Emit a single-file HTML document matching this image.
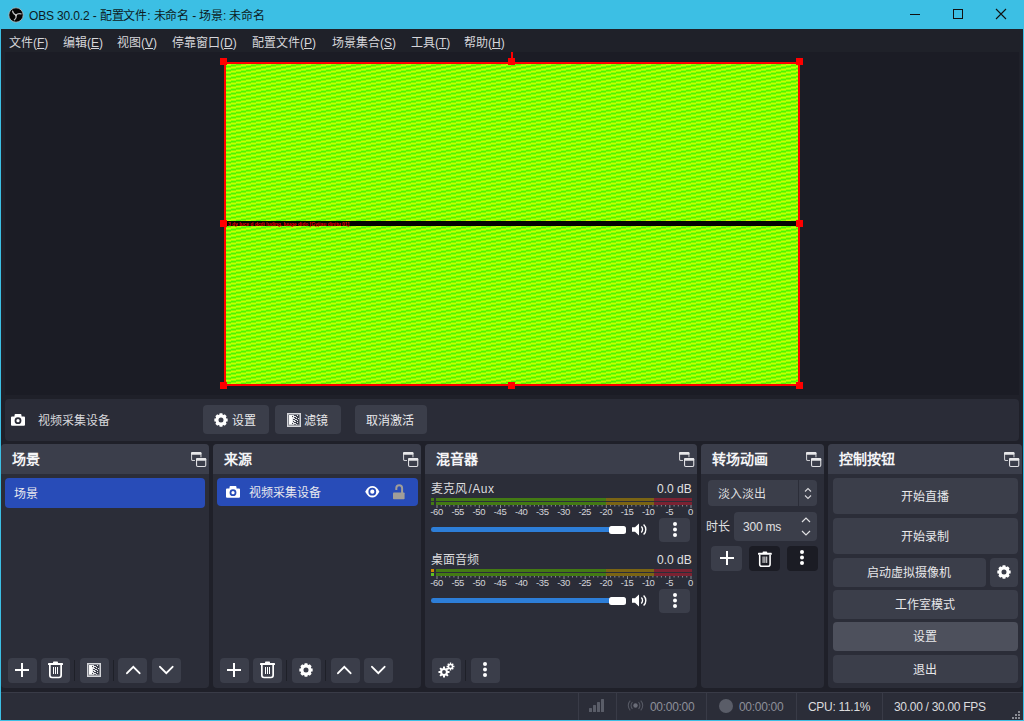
<!DOCTYPE html>
<html lang="zh-CN">
<head>
<meta charset="utf-8">
<style>
*{margin:0;padding:0;box-sizing:border-box}
html,body{width:1024px;height:721px;overflow:hidden}
body{position:relative;background:#1f2029;font-family:"Liberation Sans",sans-serif;color:#e6e6e8;font-size:12px}
.a{position:absolute}
svg.a{display:block;overflow:visible}
.t{position:absolute;white-space:nowrap;line-height:1}
u{text-decoration:underline;text-underline-offset:1px}
</style>
</head>
<body>
<div class="a" style="left:0px;top:0px;width:1024px;height:29px;background:#3cbfe4;"></div>
<div class="a" style="left:0px;top:0px;width:1px;height:721px;background:#3cbfe4;"></div>
<div class="a" style="left:1023px;top:0px;width:1px;height:721px;background:#3cbfe4;"></div>
<div class="a" style="left:0px;top:720px;width:1024px;height:1px;background:#3cbfe4;"></div>
<svg class="a" style="left:8px;top:6.5px" width="16" height="16" viewBox="0 0 16 16"><circle cx="8" cy="8" r="7.2" fill="#050505" stroke="#b9bcbf" stroke-width="0.8"/><g fill="none" stroke="#b8b8b8" stroke-width="1.3" stroke-linecap="round"><path d="M8 8 Q 5.2 7.2 4.6 4.2"/><path d="M8 8 Q 5.2 7.2 4.6 4.2" transform="rotate(120 8 8)"/><path d="M8 8 Q 5.2 7.2 4.6 4.2" transform="rotate(240 8 8)"/></g><circle cx="8" cy="8" r="1.1" fill="#c8c8c8"/></svg>
<div class="t" style="left:29px;top:9.5px;font-size:12px;color:#0d1b22;letter-spacing:-0.15px">OBS 30.0.2 - 配置文件: 未命名 - 场景: 未命名</div>
<div class="a" style="left:910px;top:14px;width:10px;height:1px;background:#111;"></div>
<div class="a" style="left:953px;top:9px;width:10px;height:10px;border:1px solid #111"></div>
<svg class="a" style="left:995px;top:8px" width="12" height="12" viewBox="0 0 12 12"><path d="M1 1L11 11M11 1L1 11" stroke="#111" stroke-width="1.1"/></svg>
<div class="a" style="left:1px;top:29px;width:1022px;height:23px;background:#1f2129;"></div>
<div class="t" style="left:9px;top:36.5px;font-size:12px;color:#d6d6da;">文件(<u>F</u>)</div>
<div class="t" style="left:63px;top:36.5px;font-size:12px;color:#d6d6da;">编辑(<u>E</u>)</div>
<div class="t" style="left:117px;top:36.5px;font-size:12px;color:#d6d6da;">视图(<u>V</u>)</div>
<div class="t" style="left:172px;top:36.5px;font-size:12px;color:#d6d6da;">停靠窗口(<u>D</u>)</div>
<div class="t" style="left:252px;top:36.5px;font-size:12px;color:#d6d6da;">配置文件(<u>P</u>)</div>
<div class="t" style="left:332px;top:36.5px;font-size:12px;color:#d6d6da;">场景集合(<u>S</u>)</div>
<div class="t" style="left:411px;top:36.5px;font-size:12px;color:#d6d6da;">工具(<u>T</u>)</div>
<div class="t" style="left:464px;top:36.5px;font-size:12px;color:#d6d6da;">帮助(<u>H</u>)</div>
<div class="a" style="left:5px;top:52px;width:1014px;height:343px;background:#1b1c25;"></div>
<div class="a" style="left:224px;top:62px;width:576px;height:324px;border:2px solid #ff0000;background:#88fc00"></div>
<svg class="a" style="left:226px;top:64px" width="572" height="320"><defs><pattern id="gp" width="20" height="4" patternUnits="userSpaceOnUse"><rect x="0" y="0" width="5" height="1" fill="#c8ff00"/><rect x="0" y="1" width="5" height="1" fill="#90ff00"/><rect x="0" y="2" width="5" height="1" fill="#4cf600"/><rect x="0" y="3" width="5" height="1" fill="#84fc00"/><rect x="5" y="3" width="5" height="1" fill="#c8ff00"/><rect x="5" y="0" width="5" height="1" fill="#90ff00"/><rect x="5" y="1" width="5" height="1" fill="#4cf600"/><rect x="5" y="2" width="5" height="1" fill="#84fc00"/><rect x="10" y="2" width="5" height="1" fill="#c8ff00"/><rect x="10" y="3" width="5" height="1" fill="#90ff00"/><rect x="10" y="0" width="5" height="1" fill="#4cf600"/><rect x="10" y="1" width="5" height="1" fill="#84fc00"/><rect x="15" y="1" width="5" height="1" fill="#c8ff00"/><rect x="15" y="2" width="5" height="1" fill="#90ff00"/><rect x="15" y="3" width="5" height="1" fill="#4cf600"/><rect x="15" y="0" width="5" height="1" fill="#84fc00"/></pattern></defs><rect width="572" height="320" fill="url(#gp)"/></svg>
<div class="a" style="left:511px;top:52px;width:1.6px;height:7px;background:#ff0000;"></div>
<div class="a" style="left:226px;top:221px;width:572px;height:5px;background:#050505;"></div>
<div class="t" style="left:228px;top:221.5px;font-size:5px;color:#e80000;font-weight:bold;letter-spacing:-0.05px">3 dy luce d dcdi luding, luuge dido [Gyjiau dinitu 01]</div>
<div class="a" style="left:220px;top:58px;width:7px;height:7px;background:#ff0000;"></div>
<div class="a" style="left:220px;top:220px;width:7px;height:7px;background:#ff0000;"></div>
<div class="a" style="left:220px;top:382px;width:7px;height:7px;background:#ff0000;"></div>
<div class="a" style="left:508px;top:58px;width:7px;height:7px;background:#ff0000;"></div>
<div class="a" style="left:508px;top:382px;width:7px;height:7px;background:#ff0000;"></div>
<div class="a" style="left:796px;top:58px;width:7px;height:7px;background:#ff0000;"></div>
<div class="a" style="left:796px;top:220px;width:7px;height:7px;background:#ff0000;"></div>
<div class="a" style="left:796px;top:382px;width:7px;height:7px;background:#ff0000;"></div>
<div class="a" style="left:5px;top:399px;width:1014px;height:42px;background:#2a2c37;border-radius:4px;"></div>
<svg class="a" style="left:11px;top:414px" width="14" height="13" viewBox="0 0 14 13"><path fill="#fff" d="M4.4 0h5.2a0.8 0.8 0 0 1 0.8 0.7l0.2 1.7h2.4a1 1 0 0 1 1 1v7.4a1 1 0 0 1-1 1H1a1 1 0 0 1-1-1V3.4a1 1 0 0 1 1-1h2.4l0.2-1.7A0.8 0.8 0 0 1 4.4 0z"/><circle cx="7" cy="6.7" r="3.4" fill="#2a2c37"/><circle cx="7" cy="6.7" r="1.6" fill="#fff"/></svg>
<div class="t" style="left:38px;top:415px;font-size:12px;color:#d8d8dc;">视频采集设备</div>
<div class="a" style="left:203px;top:405px;width:66px;height:29px;background:#3b3e4a;border-radius:4px;"></div>
<svg class="a" style="left:214px;top:413px" width="14" height="14" viewBox="0 0 14 14"><path fill="#fff" fill-rule="evenodd" d="M5.44 1.62 L5.62 0.34 L8.38 0.34 L8.56 1.62 L9.70 2.09 L10.73 1.32 L12.68 3.27 L11.91 4.30 L12.38 5.44 L13.66 5.62 L13.66 8.38 L12.38 8.56 L11.91 9.70 L12.68 10.73 L10.73 12.68 L9.70 11.91 L8.56 12.38 L8.38 13.66 L5.62 13.66 L5.44 12.38 L4.30 11.91 L3.27 12.68 L1.32 10.73 L2.09 9.70 L1.62 8.56 L0.34 8.38 L0.34 5.62 L1.62 5.44 L2.09 4.30 L1.32 3.27 L3.27 1.32 L4.30 2.09Z M9.50 7.00 A2.5 2.5 0 1 0 4.50 7.00 A2.5 2.5 0 1 0 9.50 7.00Z"/></svg>
<div class="t" style="left:232px;top:415px;font-size:12px;color:#e8e8ea;">设置</div>
<div class="a" style="left:275px;top:405px;width:66px;height:29px;background:#3b3e4a;border-radius:4px;"></div>
<svg class="a" style="left:287px;top:413px" width="14" height="14" viewBox="0 0 14 14"><rect x="0.75" y="0.75" width="12.5" height="12.5" fill="none" stroke="#d4d5d9" stroke-width="1.5"/><rect x="2" y="2" width="3" height="10" fill="#fafafa"/><rect x="5" y="2" width="1" height="1" fill="#e4e4e6"/><rect x="5" y="4" width="1" height="1" fill="#e4e4e6"/><rect x="5" y="5" width="1" height="1" fill="#e4e4e6"/><rect x="5" y="6" width="1" height="1" fill="#e4e4e6"/><rect x="5" y="7" width="1" height="1" fill="#e4e4e6"/><rect x="5" y="8" width="1" height="1" fill="#e4e4e6"/><rect x="5" y="9" width="1" height="1" fill="#e4e4e6"/><rect x="5" y="11" width="1" height="1" fill="#e4e4e6"/><rect x="6" y="2" width="1" height="1" fill="#e4e4e6"/><rect x="6" y="3" width="1" height="1" fill="#e4e4e6"/><rect x="6" y="4" width="1" height="1" fill="#e4e4e6"/><rect x="6" y="5" width="1" height="1" fill="#e4e4e6"/><rect x="6" y="7" width="1" height="1" fill="#e4e4e6"/><rect x="6" y="9" width="1" height="1" fill="#e4e4e6"/><rect x="6" y="10" width="1" height="1" fill="#e4e4e6"/><rect x="6" y="11" width="1" height="1" fill="#e4e4e6"/><rect x="7" y="3" width="1" height="1" fill="#e4e4e6"/><rect x="7" y="5" width="1" height="1" fill="#e4e4e6"/><rect x="7" y="7" width="1" height="1" fill="#e4e4e6"/><rect x="7" y="8" width="1" height="1" fill="#e4e4e6"/><rect x="7" y="10" width="1" height="1" fill="#e4e4e6"/><rect x="8" y="3" width="1" height="1" fill="#e4e4e6"/><rect x="8" y="6" width="1" height="1" fill="#e4e4e6"/><rect x="8" y="8" width="1" height="1" fill="#e4e4e6"/><rect x="8" y="10" width="1" height="1" fill="#e4e4e6"/><rect x="9" y="4" width="1" height="1" fill="#e4e4e6"/><rect x="9" y="6" width="1" height="1" fill="#e4e4e6"/><rect x="9" y="11" width="1" height="1" fill="#e4e4e6"/><rect x="10" y="2" width="1" height="1" fill="#e4e4e6"/><rect x="10" y="7" width="1" height="1" fill="#e4e4e6"/><rect x="10" y="9" width="1" height="1" fill="#e4e4e6"/><rect x="11" y="5" width="1" height="1" fill="#e4e4e6"/><rect x="1.5" y="11.5" width="11" height="1.2" fill="#a8a9ae"/></svg>
<div class="t" style="left:303.5px;top:415px;font-size:12px;color:#e8e8ea;">滤镜</div>
<div class="a" style="left:355px;top:405px;width:72px;height:29px;background:#3b3e4a;border-radius:4px;"></div>
<div class="t" style="left:366px;top:415px;font-size:12px;color:#e8e8ea;">取消激活</div>
<div class="a" style="left:1px;top:444px;width:208px;height:244px;background:#2b2d38;border-radius:4px;overflow:hidden"><div class="a" style="left:0;top:0;width:208px;height:30px;background:#3b3e4b"></div></div>
<div class="t" style="left:12px;top:452px;font-size:14px;color:#f4f4f6;font-weight:bold">场景</div>
<svg class="a" style="left:189px;top:452px" width="18" height="16" viewBox="0 0 18 16"><rect x="2.55" y="0.55" width="9.4" height="8" rx="1.2" fill="none" stroke="#c8c9ce" stroke-width="1.1"/><rect x="2" y="0" width="10.5" height="2.8" rx="1.2" fill="#e8e8ea"/><rect x="6" y="5.3" width="12" height="11" fill="#3b3e4b"/><rect x="7.55" y="6.55" width="9.2" height="7.9" rx="1.2" fill="none" stroke="#e0e0e4" stroke-width="1.1"/><rect x="7" y="6" width="10.3" height="2.8" rx="1.2" fill="#e8e8ea"/></svg>
<div class="a" style="left:213px;top:444px;width:208px;height:244px;background:#2b2d38;border-radius:4px;overflow:hidden"><div class="a" style="left:0;top:0;width:208px;height:30px;background:#3b3e4b"></div></div>
<div class="t" style="left:224px;top:452px;font-size:14px;color:#f4f4f6;font-weight:bold">来源</div>
<svg class="a" style="left:401px;top:452px" width="18" height="16" viewBox="0 0 18 16"><rect x="2.55" y="0.55" width="9.4" height="8" rx="1.2" fill="none" stroke="#c8c9ce" stroke-width="1.1"/><rect x="2" y="0" width="10.5" height="2.8" rx="1.2" fill="#e8e8ea"/><rect x="6" y="5.3" width="12" height="11" fill="#3b3e4b"/><rect x="7.55" y="6.55" width="9.2" height="7.9" rx="1.2" fill="none" stroke="#e0e0e4" stroke-width="1.1"/><rect x="7" y="6" width="10.3" height="2.8" rx="1.2" fill="#e8e8ea"/></svg>
<div class="a" style="left:425px;top:444px;width:272px;height:244px;background:#2b2d38;border-radius:4px;overflow:hidden"><div class="a" style="left:0;top:0;width:272px;height:30px;background:#3b3e4b"></div></div>
<div class="t" style="left:436px;top:452px;font-size:14px;color:#f4f4f6;font-weight:bold">混音器</div>
<svg class="a" style="left:677px;top:452px" width="18" height="16" viewBox="0 0 18 16"><rect x="2.55" y="0.55" width="9.4" height="8" rx="1.2" fill="none" stroke="#c8c9ce" stroke-width="1.1"/><rect x="2" y="0" width="10.5" height="2.8" rx="1.2" fill="#e8e8ea"/><rect x="6" y="5.3" width="12" height="11" fill="#3b3e4b"/><rect x="7.55" y="6.55" width="9.2" height="7.9" rx="1.2" fill="none" stroke="#e0e0e4" stroke-width="1.1"/><rect x="7" y="6" width="10.3" height="2.8" rx="1.2" fill="#e8e8ea"/></svg>
<div class="a" style="left:701px;top:444px;width:123px;height:244px;background:#2b2d38;border-radius:4px;overflow:hidden"><div class="a" style="left:0;top:0;width:123px;height:30px;background:#3b3e4b"></div></div>
<div class="t" style="left:712px;top:452px;font-size:14px;color:#f4f4f6;font-weight:bold">转场动画</div>
<svg class="a" style="left:804px;top:452px" width="18" height="16" viewBox="0 0 18 16"><rect x="2.55" y="0.55" width="9.4" height="8" rx="1.2" fill="none" stroke="#c8c9ce" stroke-width="1.1"/><rect x="2" y="0" width="10.5" height="2.8" rx="1.2" fill="#e8e8ea"/><rect x="6" y="5.3" width="12" height="11" fill="#3b3e4b"/><rect x="7.55" y="6.55" width="9.2" height="7.9" rx="1.2" fill="none" stroke="#e0e0e4" stroke-width="1.1"/><rect x="7" y="6" width="10.3" height="2.8" rx="1.2" fill="#e8e8ea"/></svg>
<div class="a" style="left:828px;top:444px;width:194px;height:244px;background:#2b2d38;border-radius:4px;overflow:hidden"><div class="a" style="left:0;top:0;width:194px;height:30px;background:#3b3e4b"></div></div>
<div class="t" style="left:839px;top:452px;font-size:14px;color:#f4f4f6;font-weight:bold">控制按钮</div>
<svg class="a" style="left:1002px;top:452px" width="18" height="16" viewBox="0 0 18 16"><rect x="2.55" y="0.55" width="9.4" height="8" rx="1.2" fill="none" stroke="#c8c9ce" stroke-width="1.1"/><rect x="2" y="0" width="10.5" height="2.8" rx="1.2" fill="#e8e8ea"/><rect x="6" y="5.3" width="12" height="11" fill="#3b3e4b"/><rect x="7.55" y="6.55" width="9.2" height="7.9" rx="1.2" fill="none" stroke="#e0e0e4" stroke-width="1.1"/><rect x="7" y="6" width="10.3" height="2.8" rx="1.2" fill="#e8e8ea"/></svg>
<div class="a" style="left:5px;top:477.5px;width:200px;height:30.5px;background:#284cb8;border-radius:4px;"></div>
<div class="t" style="left:14px;top:488px;font-size:12px;color:#e8e8ee;">场景</div>
<div class="a" style="left:8px;top:658px;width:29px;height:25px;background:#3b3e4a;border-radius:4px;"></div>
<div class="a" style="left:41px;top:658px;width:29px;height:25px;background:#3b3e4a;border-radius:4px;"></div>
<div class="a" style="left:80px;top:658px;width:29px;height:25px;background:#3b3e4a;border-radius:4px;"></div>
<div class="a" style="left:118px;top:658px;width:29px;height:25px;background:#3b3e4a;border-radius:4px;"></div>
<div class="a" style="left:152px;top:658px;width:29px;height:25px;background:#3b3e4a;border-radius:4px;"></div>
<div class="a" style="left:74px;top:660px;width:1px;height:21px;background:#1e2028;"></div>
<div class="a" style="left:113px;top:660px;width:1px;height:21px;background:#1e2028;"></div>
<svg class="a" style="left:15px;top:663px" width="14" height="14" viewBox="0 0 14 14"><path d="M7.0 0V14M0 7.0H14" stroke="#fff" stroke-width="2"/></svg>
<svg class="a" style="left:48px;top:661px" width="15.0" height="17.0" viewBox="0 0 15 17"><rect x="5" y="0.6" width="5" height="2" rx="0.8" fill="#fff"/><rect x="0" y="2" width="15" height="2" rx="0.6" fill="#fff"/><path d="M1.85 4V14.3a2.2 2.2 0 0 0 2.2 2.2h6.9a2.2 2.2 0 0 0 2.2-2.2V4" fill="none" stroke="#fff" stroke-width="1.7"/><rect x="5" y="6" width="1" height="7" fill="#fff"/><rect x="7" y="6" width="1" height="7" fill="#fff"/><rect x="9" y="6" width="1" height="7" fill="#fff"/></svg>
<svg class="a" style="left:87px;top:663px" width="14" height="14" viewBox="0 0 14 14"><rect x="0.75" y="0.75" width="12.5" height="12.5" fill="none" stroke="#d4d5d9" stroke-width="1.5"/><rect x="2" y="2" width="3" height="10" fill="#fafafa"/><rect x="5" y="2" width="1" height="1" fill="#e4e4e6"/><rect x="5" y="4" width="1" height="1" fill="#e4e4e6"/><rect x="5" y="5" width="1" height="1" fill="#e4e4e6"/><rect x="5" y="6" width="1" height="1" fill="#e4e4e6"/><rect x="5" y="7" width="1" height="1" fill="#e4e4e6"/><rect x="5" y="8" width="1" height="1" fill="#e4e4e6"/><rect x="5" y="9" width="1" height="1" fill="#e4e4e6"/><rect x="5" y="11" width="1" height="1" fill="#e4e4e6"/><rect x="6" y="2" width="1" height="1" fill="#e4e4e6"/><rect x="6" y="3" width="1" height="1" fill="#e4e4e6"/><rect x="6" y="4" width="1" height="1" fill="#e4e4e6"/><rect x="6" y="5" width="1" height="1" fill="#e4e4e6"/><rect x="6" y="7" width="1" height="1" fill="#e4e4e6"/><rect x="6" y="9" width="1" height="1" fill="#e4e4e6"/><rect x="6" y="10" width="1" height="1" fill="#e4e4e6"/><rect x="6" y="11" width="1" height="1" fill="#e4e4e6"/><rect x="7" y="3" width="1" height="1" fill="#e4e4e6"/><rect x="7" y="5" width="1" height="1" fill="#e4e4e6"/><rect x="7" y="7" width="1" height="1" fill="#e4e4e6"/><rect x="7" y="8" width="1" height="1" fill="#e4e4e6"/><rect x="7" y="10" width="1" height="1" fill="#e4e4e6"/><rect x="8" y="3" width="1" height="1" fill="#e4e4e6"/><rect x="8" y="6" width="1" height="1" fill="#e4e4e6"/><rect x="8" y="8" width="1" height="1" fill="#e4e4e6"/><rect x="8" y="10" width="1" height="1" fill="#e4e4e6"/><rect x="9" y="4" width="1" height="1" fill="#e4e4e6"/><rect x="9" y="6" width="1" height="1" fill="#e4e4e6"/><rect x="9" y="11" width="1" height="1" fill="#e4e4e6"/><rect x="10" y="2" width="1" height="1" fill="#e4e4e6"/><rect x="10" y="7" width="1" height="1" fill="#e4e4e6"/><rect x="10" y="9" width="1" height="1" fill="#e4e4e6"/><rect x="11" y="5" width="1" height="1" fill="#e4e4e6"/><rect x="1.5" y="11.5" width="11" height="1.2" fill="#a8a9ae"/></svg>
<svg class="a" style="left:126px;top:665px" width="15" height="10" viewBox="0 0 15 10"><path d="M1 8.2L7.3 1.8L13.6 8.2" fill="none" stroke="#fff" stroke-width="1.9" stroke-linecap="round"/></svg>
<svg class="a" style="left:159px;top:665px" width="15" height="10" viewBox="0 0 15 10"><path d="M1 1.8L7.3 8.2L13.6 1.8" fill="none" stroke="#fff" stroke-width="1.9" stroke-linecap="round"/></svg>
<div class="a" style="left:217px;top:478px;width:201px;height:28px;background:#284cb8;border-radius:4px;"></div>
<svg class="a" style="left:226px;top:486px" width="14" height="13" viewBox="0 0 14 13"><path fill="#fff" d="M4.4 0h5.2a0.8 0.8 0 0 1 0.8 0.7l0.2 1.7h2.4a1 1 0 0 1 1 1v7.4a1 1 0 0 1-1 1H1a1 1 0 0 1-1-1V3.4a1 1 0 0 1 1-1h2.4l0.2-1.7A0.8 0.8 0 0 1 4.4 0z"/><circle cx="7" cy="6.7" r="3.4" fill="#284cb8"/><circle cx="7" cy="6.7" r="1.6" fill="#fff"/></svg>
<div class="t" style="left:249px;top:487px;font-size:12px;color:#e8e8ee;">视频采集设备</div>
<svg class="a" style="left:365px;top:486px" width="15" height="12" viewBox="0 0 15 12"><path d="M0.2 5.7C2.3 1.6 4.8 0 7.3 0S12.3 1.6 14.4 5.7C12.3 9.8 9.8 11.4 7.3 11.4S2.3 9.8 0.2 5.7z" fill="#fff"/><circle cx="7.3" cy="5.7" r="3.9" fill="#284cb8"/><circle cx="7.3" cy="5.7" r="2.1" fill="#fff"/></svg>
<svg class="a" style="left:393px;top:484px" width="12" height="16" viewBox="0 0 12 16"><path d="M3.3 6V4.2A2.9 2.9 0 0 1 9.1 4.2V9" fill="none" stroke="#a19e98" stroke-width="2"/><rect x="0" y="8.4" width="11.6" height="6.8" rx="0.8" fill="#a19e98"/></svg>
<div class="a" style="left:220px;top:658px;width:29px;height:25px;background:#3b3e4a;border-radius:4px;"></div>
<div class="a" style="left:253px;top:658px;width:29px;height:25px;background:#3b3e4a;border-radius:4px;"></div>
<div class="a" style="left:292px;top:658px;width:29px;height:25px;background:#3b3e4a;border-radius:4px;"></div>
<div class="a" style="left:331px;top:658px;width:29px;height:25px;background:#3b3e4a;border-radius:4px;"></div>
<div class="a" style="left:364px;top:658px;width:29px;height:25px;background:#3b3e4a;border-radius:4px;"></div>
<div class="a" style="left:286px;top:660px;width:1px;height:21px;background:#1e2028;"></div>
<div class="a" style="left:325px;top:660px;width:1px;height:21px;background:#1e2028;"></div>
<svg class="a" style="left:227px;top:663px" width="14" height="14" viewBox="0 0 14 14"><path d="M7.0 0V14M0 7.0H14" stroke="#fff" stroke-width="2"/></svg>
<svg class="a" style="left:260px;top:661px" width="15.0" height="17.0" viewBox="0 0 15 17"><rect x="5" y="0.6" width="5" height="2" rx="0.8" fill="#fff"/><rect x="0" y="2" width="15" height="2" rx="0.6" fill="#fff"/><path d="M1.85 4V14.3a2.2 2.2 0 0 0 2.2 2.2h6.9a2.2 2.2 0 0 0 2.2-2.2V4" fill="none" stroke="#fff" stroke-width="1.7"/><rect x="5" y="6" width="1" height="7" fill="#fff"/><rect x="7" y="6" width="1" height="7" fill="#fff"/><rect x="9" y="6" width="1" height="7" fill="#fff"/></svg>
<svg class="a" style="left:299px;top:663px" width="14" height="14" viewBox="0 0 14 14"><path fill="#fff" fill-rule="evenodd" d="M5.44 1.62 L5.62 0.34 L8.38 0.34 L8.56 1.62 L9.70 2.09 L10.73 1.32 L12.68 3.27 L11.91 4.30 L12.38 5.44 L13.66 5.62 L13.66 8.38 L12.38 8.56 L11.91 9.70 L12.68 10.73 L10.73 12.68 L9.70 11.91 L8.56 12.38 L8.38 13.66 L5.62 13.66 L5.44 12.38 L4.30 11.91 L3.27 12.68 L1.32 10.73 L2.09 9.70 L1.62 8.56 L0.34 8.38 L0.34 5.62 L1.62 5.44 L2.09 4.30 L1.32 3.27 L3.27 1.32 L4.30 2.09Z M9.50 7.00 A2.5 2.5 0 1 0 4.50 7.00 A2.5 2.5 0 1 0 9.50 7.00Z"/></svg>
<svg class="a" style="left:337px;top:665px" width="15" height="10" viewBox="0 0 15 10"><path d="M1 8.2L7.3 1.8L13.6 8.2" fill="none" stroke="#fff" stroke-width="1.9" stroke-linecap="round"/></svg>
<svg class="a" style="left:371px;top:665px" width="15" height="10" viewBox="0 0 15 10"><path d="M1 1.8L7.3 8.2L13.6 1.8" fill="none" stroke="#fff" stroke-width="1.9" stroke-linecap="round"/></svg>
<div class="t" style="left:431px;top:483px;font-size:12px;color:#dcdcde;">麦克风<span style="letter-spacing:0.5px;margin-left:1.5px">/Aux</span></div><div class="t" style="left:657px;top:483px;font-size:12px;color:#e0e0e2;">0.0 dB</div><div class="a" style="left:431px;top:498px;width:3px;height:3px;background:#437a14;"></div><div class="a" style="left:436px;top:498px;width:170px;height:3px;background:#437a14;"></div><div class="a" style="left:606px;top:498px;width:48px;height:3px;background:#7a6414;"></div><div class="a" style="left:654px;top:498px;width:38px;height:3px;background:#7a2232;"></div><div class="a" style="left:431px;top:502px;width:3px;height:3px;background:#437a14;"></div><div class="a" style="left:436px;top:502px;width:170px;height:3px;background:#437a14;"></div><div class="a" style="left:606px;top:502px;width:48px;height:3px;background:#7a6414;"></div><div class="a" style="left:654px;top:502px;width:38px;height:3px;background:#7a2232;"></div><svg class="a" style="left:436px;top:505px" width="256" height="4" viewBox="0 0 256 4"><rect x="0.50" y="0" width="1" height="3" fill="#8a8c94"/><rect x="4.73" y="0" width="1" height="1.5" fill="#8a8c94"/><rect x="8.97" y="0" width="1" height="1.5" fill="#8a8c94"/><rect x="13.20" y="0" width="1" height="1.5" fill="#8a8c94"/><rect x="17.43" y="0" width="1" height="1.5" fill="#8a8c94"/><rect x="21.67" y="0" width="1" height="3" fill="#8a8c94"/><rect x="25.90" y="0" width="1" height="1.5" fill="#8a8c94"/><rect x="30.13" y="0" width="1" height="1.5" fill="#8a8c94"/><rect x="34.37" y="0" width="1" height="1.5" fill="#8a8c94"/><rect x="38.60" y="0" width="1" height="1.5" fill="#8a8c94"/><rect x="42.83" y="0" width="1" height="3" fill="#8a8c94"/><rect x="47.07" y="0" width="1" height="1.5" fill="#8a8c94"/><rect x="51.30" y="0" width="1" height="1.5" fill="#8a8c94"/><rect x="55.53" y="0" width="1" height="1.5" fill="#8a8c94"/><rect x="59.77" y="0" width="1" height="1.5" fill="#8a8c94"/><rect x="64.00" y="0" width="1" height="3" fill="#8a8c94"/><rect x="68.23" y="0" width="1" height="1.5" fill="#8a8c94"/><rect x="72.47" y="0" width="1" height="1.5" fill="#8a8c94"/><rect x="76.70" y="0" width="1" height="1.5" fill="#8a8c94"/><rect x="80.93" y="0" width="1" height="1.5" fill="#8a8c94"/><rect x="85.17" y="0" width="1" height="3" fill="#8a8c94"/><rect x="89.40" y="0" width="1" height="1.5" fill="#8a8c94"/><rect x="93.63" y="0" width="1" height="1.5" fill="#8a8c94"/><rect x="97.87" y="0" width="1" height="1.5" fill="#8a8c94"/><rect x="102.10" y="0" width="1" height="1.5" fill="#8a8c94"/><rect x="106.33" y="0" width="1" height="3" fill="#8a8c94"/><rect x="110.57" y="0" width="1" height="1.5" fill="#8a8c94"/><rect x="114.80" y="0" width="1" height="1.5" fill="#8a8c94"/><rect x="119.03" y="0" width="1" height="1.5" fill="#8a8c94"/><rect x="123.27" y="0" width="1" height="1.5" fill="#8a8c94"/><rect x="127.50" y="0" width="1" height="3" fill="#8a8c94"/><rect x="131.73" y="0" width="1" height="1.5" fill="#8a8c94"/><rect x="135.97" y="0" width="1" height="1.5" fill="#8a8c94"/><rect x="140.20" y="0" width="1" height="1.5" fill="#8a8c94"/><rect x="144.43" y="0" width="1" height="1.5" fill="#8a8c94"/><rect x="148.67" y="0" width="1" height="3" fill="#8a8c94"/><rect x="152.90" y="0" width="1" height="1.5" fill="#8a8c94"/><rect x="157.13" y="0" width="1" height="1.5" fill="#8a8c94"/><rect x="161.37" y="0" width="1" height="1.5" fill="#8a8c94"/><rect x="165.60" y="0" width="1" height="1.5" fill="#8a8c94"/><rect x="169.83" y="0" width="1" height="3" fill="#8a8c94"/><rect x="174.07" y="0" width="1" height="1.5" fill="#8a8c94"/><rect x="178.30" y="0" width="1" height="1.5" fill="#8a8c94"/><rect x="182.53" y="0" width="1" height="1.5" fill="#8a8c94"/><rect x="186.77" y="0" width="1" height="1.5" fill="#8a8c94"/><rect x="191.00" y="0" width="1" height="3" fill="#8a8c94"/><rect x="195.23" y="0" width="1" height="1.5" fill="#8a8c94"/><rect x="199.47" y="0" width="1" height="1.5" fill="#8a8c94"/><rect x="203.70" y="0" width="1" height="1.5" fill="#8a8c94"/><rect x="207.93" y="0" width="1" height="1.5" fill="#8a8c94"/><rect x="212.17" y="0" width="1" height="3" fill="#8a8c94"/><rect x="216.40" y="0" width="1" height="1.5" fill="#8a8c94"/><rect x="220.63" y="0" width="1" height="1.5" fill="#8a8c94"/><rect x="224.87" y="0" width="1" height="1.5" fill="#8a8c94"/><rect x="229.10" y="0" width="1" height="1.5" fill="#8a8c94"/><rect x="233.33" y="0" width="1" height="3" fill="#8a8c94"/><rect x="237.57" y="0" width="1" height="1.5" fill="#8a8c94"/><rect x="241.80" y="0" width="1" height="1.5" fill="#8a8c94"/><rect x="246.03" y="0" width="1" height="1.5" fill="#8a8c94"/><rect x="250.27" y="0" width="1" height="1.5" fill="#8a8c94"/><rect x="254.50" y="0" width="1" height="3" fill="#8a8c94"/></svg><div class="t" style="left:416.5px;width:40px;text-align:center;top:507px;font-size:9.5px;color:#d4d4d8;letter-spacing:-0.4px">-60</div><div class="t" style="left:437.7px;width:40px;text-align:center;top:507px;font-size:9.5px;color:#d4d4d8;letter-spacing:-0.4px">-55</div><div class="t" style="left:458.8px;width:40px;text-align:center;top:507px;font-size:9.5px;color:#d4d4d8;letter-spacing:-0.4px">-50</div><div class="t" style="left:480.0px;width:40px;text-align:center;top:507px;font-size:9.5px;color:#d4d4d8;letter-spacing:-0.4px">-45</div><div class="t" style="left:501.2px;width:40px;text-align:center;top:507px;font-size:9.5px;color:#d4d4d8;letter-spacing:-0.4px">-40</div><div class="t" style="left:522.3px;width:40px;text-align:center;top:507px;font-size:9.5px;color:#d4d4d8;letter-spacing:-0.4px">-35</div><div class="t" style="left:543.5px;width:40px;text-align:center;top:507px;font-size:9.5px;color:#d4d4d8;letter-spacing:-0.4px">-30</div><div class="t" style="left:564.7px;width:40px;text-align:center;top:507px;font-size:9.5px;color:#d4d4d8;letter-spacing:-0.4px">-25</div><div class="t" style="left:585.8px;width:40px;text-align:center;top:507px;font-size:9.5px;color:#d4d4d8;letter-spacing:-0.4px">-20</div><div class="t" style="left:607.0px;width:40px;text-align:center;top:507px;font-size:9.5px;color:#d4d4d8;letter-spacing:-0.4px">-15</div><div class="t" style="left:628.2px;width:40px;text-align:center;top:507px;font-size:9.5px;color:#d4d4d8;letter-spacing:-0.4px">-10</div><div class="t" style="left:649.3px;width:40px;text-align:center;top:507px;font-size:9.5px;color:#d4d4d8;letter-spacing:-0.4px">-5</div><div class="t" style="left:670.5px;width:40px;text-align:center;top:507px;font-size:9.5px;color:#d4d4d8;letter-spacing:-0.4px">0</div><div class="a" style="left:431px;top:527px;width:180px;height:4.6px;background:#2d7ed8;border-radius:2.3px;"></div><div class="a" style="left:609px;top:526px;width:17px;height:8px;background:#ffffff;border-radius:2.5px;"></div><svg class="a" style="left:632px;top:523px" width="15" height="13" viewBox="0 0 15 13"><path d="M0 4.2h3L7 0.6v11.8L3 8.8H0z" fill="#fff"/><path d="M9.3 3.6a4 4 0 0 1 0 5.8" fill="none" stroke="#fff" stroke-width="1.4"/><path d="M11.6 1.4a7 7 0 0 1 0 10.2" fill="none" stroke="#fff" stroke-width="1.4"/></svg><div class="a" style="left:659px;top:518px;width:31px;height:24px;background:#3b3e4a;border-radius:4px;"></div><svg class="a" style="left:673px;top:522px" width="4" height="16" viewBox="0 0 4 16"><circle cx="2" cy="2.0" r="2" fill="#fff"/><circle cx="2" cy="7.5" r="2" fill="#fff"/><circle cx="2" cy="13.0" r="2" fill="#fff"/></svg>
<div class="t" style="left:431px;top:554px;font-size:12px;color:#dcdcde;">桌面音频</div><div class="t" style="left:657px;top:554px;font-size:12px;color:#e0e0e2;">0.0 dB</div><div class="a" style="left:431px;top:569px;width:3px;height:3px;background:#d08a00;"></div><div class="a" style="left:436px;top:569px;width:170px;height:3px;background:#437a14;"></div><div class="a" style="left:606px;top:569px;width:48px;height:3px;background:#7a6414;"></div><div class="a" style="left:654px;top:569px;width:38px;height:3px;background:#7a2232;"></div><div class="a" style="left:431px;top:573px;width:3px;height:3px;background:#60c020;"></div><div class="a" style="left:436px;top:573px;width:170px;height:3px;background:#437a14;"></div><div class="a" style="left:606px;top:573px;width:48px;height:3px;background:#7a6414;"></div><div class="a" style="left:654px;top:573px;width:38px;height:3px;background:#7a2232;"></div><svg class="a" style="left:436px;top:576px" width="256" height="4" viewBox="0 0 256 4"><rect x="0.50" y="0" width="1" height="3" fill="#8a8c94"/><rect x="4.73" y="0" width="1" height="1.5" fill="#8a8c94"/><rect x="8.97" y="0" width="1" height="1.5" fill="#8a8c94"/><rect x="13.20" y="0" width="1" height="1.5" fill="#8a8c94"/><rect x="17.43" y="0" width="1" height="1.5" fill="#8a8c94"/><rect x="21.67" y="0" width="1" height="3" fill="#8a8c94"/><rect x="25.90" y="0" width="1" height="1.5" fill="#8a8c94"/><rect x="30.13" y="0" width="1" height="1.5" fill="#8a8c94"/><rect x="34.37" y="0" width="1" height="1.5" fill="#8a8c94"/><rect x="38.60" y="0" width="1" height="1.5" fill="#8a8c94"/><rect x="42.83" y="0" width="1" height="3" fill="#8a8c94"/><rect x="47.07" y="0" width="1" height="1.5" fill="#8a8c94"/><rect x="51.30" y="0" width="1" height="1.5" fill="#8a8c94"/><rect x="55.53" y="0" width="1" height="1.5" fill="#8a8c94"/><rect x="59.77" y="0" width="1" height="1.5" fill="#8a8c94"/><rect x="64.00" y="0" width="1" height="3" fill="#8a8c94"/><rect x="68.23" y="0" width="1" height="1.5" fill="#8a8c94"/><rect x="72.47" y="0" width="1" height="1.5" fill="#8a8c94"/><rect x="76.70" y="0" width="1" height="1.5" fill="#8a8c94"/><rect x="80.93" y="0" width="1" height="1.5" fill="#8a8c94"/><rect x="85.17" y="0" width="1" height="3" fill="#8a8c94"/><rect x="89.40" y="0" width="1" height="1.5" fill="#8a8c94"/><rect x="93.63" y="0" width="1" height="1.5" fill="#8a8c94"/><rect x="97.87" y="0" width="1" height="1.5" fill="#8a8c94"/><rect x="102.10" y="0" width="1" height="1.5" fill="#8a8c94"/><rect x="106.33" y="0" width="1" height="3" fill="#8a8c94"/><rect x="110.57" y="0" width="1" height="1.5" fill="#8a8c94"/><rect x="114.80" y="0" width="1" height="1.5" fill="#8a8c94"/><rect x="119.03" y="0" width="1" height="1.5" fill="#8a8c94"/><rect x="123.27" y="0" width="1" height="1.5" fill="#8a8c94"/><rect x="127.50" y="0" width="1" height="3" fill="#8a8c94"/><rect x="131.73" y="0" width="1" height="1.5" fill="#8a8c94"/><rect x="135.97" y="0" width="1" height="1.5" fill="#8a8c94"/><rect x="140.20" y="0" width="1" height="1.5" fill="#8a8c94"/><rect x="144.43" y="0" width="1" height="1.5" fill="#8a8c94"/><rect x="148.67" y="0" width="1" height="3" fill="#8a8c94"/><rect x="152.90" y="0" width="1" height="1.5" fill="#8a8c94"/><rect x="157.13" y="0" width="1" height="1.5" fill="#8a8c94"/><rect x="161.37" y="0" width="1" height="1.5" fill="#8a8c94"/><rect x="165.60" y="0" width="1" height="1.5" fill="#8a8c94"/><rect x="169.83" y="0" width="1" height="3" fill="#8a8c94"/><rect x="174.07" y="0" width="1" height="1.5" fill="#8a8c94"/><rect x="178.30" y="0" width="1" height="1.5" fill="#8a8c94"/><rect x="182.53" y="0" width="1" height="1.5" fill="#8a8c94"/><rect x="186.77" y="0" width="1" height="1.5" fill="#8a8c94"/><rect x="191.00" y="0" width="1" height="3" fill="#8a8c94"/><rect x="195.23" y="0" width="1" height="1.5" fill="#8a8c94"/><rect x="199.47" y="0" width="1" height="1.5" fill="#8a8c94"/><rect x="203.70" y="0" width="1" height="1.5" fill="#8a8c94"/><rect x="207.93" y="0" width="1" height="1.5" fill="#8a8c94"/><rect x="212.17" y="0" width="1" height="3" fill="#8a8c94"/><rect x="216.40" y="0" width="1" height="1.5" fill="#8a8c94"/><rect x="220.63" y="0" width="1" height="1.5" fill="#8a8c94"/><rect x="224.87" y="0" width="1" height="1.5" fill="#8a8c94"/><rect x="229.10" y="0" width="1" height="1.5" fill="#8a8c94"/><rect x="233.33" y="0" width="1" height="3" fill="#8a8c94"/><rect x="237.57" y="0" width="1" height="1.5" fill="#8a8c94"/><rect x="241.80" y="0" width="1" height="1.5" fill="#8a8c94"/><rect x="246.03" y="0" width="1" height="1.5" fill="#8a8c94"/><rect x="250.27" y="0" width="1" height="1.5" fill="#8a8c94"/><rect x="254.50" y="0" width="1" height="3" fill="#8a8c94"/></svg><div class="t" style="left:416.5px;width:40px;text-align:center;top:578px;font-size:9.5px;color:#d4d4d8;letter-spacing:-0.4px">-60</div><div class="t" style="left:437.7px;width:40px;text-align:center;top:578px;font-size:9.5px;color:#d4d4d8;letter-spacing:-0.4px">-55</div><div class="t" style="left:458.8px;width:40px;text-align:center;top:578px;font-size:9.5px;color:#d4d4d8;letter-spacing:-0.4px">-50</div><div class="t" style="left:480.0px;width:40px;text-align:center;top:578px;font-size:9.5px;color:#d4d4d8;letter-spacing:-0.4px">-45</div><div class="t" style="left:501.2px;width:40px;text-align:center;top:578px;font-size:9.5px;color:#d4d4d8;letter-spacing:-0.4px">-40</div><div class="t" style="left:522.3px;width:40px;text-align:center;top:578px;font-size:9.5px;color:#d4d4d8;letter-spacing:-0.4px">-35</div><div class="t" style="left:543.5px;width:40px;text-align:center;top:578px;font-size:9.5px;color:#d4d4d8;letter-spacing:-0.4px">-30</div><div class="t" style="left:564.7px;width:40px;text-align:center;top:578px;font-size:9.5px;color:#d4d4d8;letter-spacing:-0.4px">-25</div><div class="t" style="left:585.8px;width:40px;text-align:center;top:578px;font-size:9.5px;color:#d4d4d8;letter-spacing:-0.4px">-20</div><div class="t" style="left:607.0px;width:40px;text-align:center;top:578px;font-size:9.5px;color:#d4d4d8;letter-spacing:-0.4px">-15</div><div class="t" style="left:628.2px;width:40px;text-align:center;top:578px;font-size:9.5px;color:#d4d4d8;letter-spacing:-0.4px">-10</div><div class="t" style="left:649.3px;width:40px;text-align:center;top:578px;font-size:9.5px;color:#d4d4d8;letter-spacing:-0.4px">-5</div><div class="t" style="left:670.5px;width:40px;text-align:center;top:578px;font-size:9.5px;color:#d4d4d8;letter-spacing:-0.4px">0</div><div class="a" style="left:431px;top:598px;width:180px;height:4.6px;background:#2d7ed8;border-radius:2.3px;"></div><div class="a" style="left:609px;top:597px;width:17px;height:8px;background:#ffffff;border-radius:2.5px;"></div><svg class="a" style="left:632px;top:594px" width="15" height="13" viewBox="0 0 15 13"><path d="M0 4.2h3L7 0.6v11.8L3 8.8H0z" fill="#fff"/><path d="M9.3 3.6a4 4 0 0 1 0 5.8" fill="none" stroke="#fff" stroke-width="1.4"/><path d="M11.6 1.4a7 7 0 0 1 0 10.2" fill="none" stroke="#fff" stroke-width="1.4"/></svg><div class="a" style="left:659px;top:589px;width:31px;height:24px;background:#3b3e4a;border-radius:4px;"></div><svg class="a" style="left:673px;top:593px" width="4" height="16" viewBox="0 0 4 16"><circle cx="2" cy="2.0" r="2" fill="#fff"/><circle cx="2" cy="7.5" r="2" fill="#fff"/><circle cx="2" cy="13.0" r="2" fill="#fff"/></svg>
<div class="a" style="left:432px;top:658px;width:29px;height:25px;background:#3b3e4a;border-radius:4px;"></div>
<div class="a" style="left:471px;top:658px;width:29px;height:25px;background:#3b3e4a;border-radius:4px;"></div>
<div class="a" style="left:465px;top:660px;width:1px;height:21px;background:#1e2028;"></div>
<svg class="a" style="left:438px;top:662px" width="17" height="16" viewBox="0 0 17 16"><path fill="#fff" fill-rule="evenodd" d="M4.99 6.13 L5.02 4.49 L6.98 4.49 L7.01 6.13 L8.02 6.55 L9.20 5.41 L10.59 6.80 L9.45 7.98 L9.87 8.99 L11.51 9.02 L11.51 10.98 L9.87 11.01 L9.45 12.02 L10.59 13.20 L9.20 14.59 L8.02 13.45 L7.01 13.87 L6.98 15.51 L5.02 15.51 L4.99 13.87 L3.98 13.45 L2.80 14.59 L1.41 13.20 L2.55 12.02 L2.13 11.01 L0.49 10.98 L0.49 9.02 L2.13 8.99 L2.55 7.98 L1.41 6.80 L2.80 5.41 L3.98 6.55Z M7.90 10.00 A1.9 1.9 0 1 0 4.10 10.00 A1.9 1.9 0 1 0 7.90 10.00Z"/><path fill="#fff" fill-rule="evenodd" d="M11.77 1.69 L11.80 0.56 L13.20 0.56 L13.23 1.69 L13.97 2.00 L14.79 1.22 L15.78 2.21 L15.00 3.03 L15.31 3.77 L16.44 3.80 L16.44 5.20 L15.31 5.23 L15.00 5.97 L15.78 6.79 L14.79 7.78 L13.97 7.00 L13.23 7.31 L13.20 8.44 L11.80 8.44 L11.77 7.31 L11.03 7.00 L10.21 7.78 L9.22 6.79 L10.00 5.97 L9.69 5.23 L8.56 5.20 L8.56 3.80 L9.69 3.77 L10.00 3.03 L9.22 2.21 L10.21 1.22 L11.03 2.00Z M13.80 4.50 A1.3 1.3 0 1 0 11.20 4.50 A1.3 1.3 0 1 0 13.80 4.50Z"/></svg>
<svg class="a" style="left:483px;top:662px" width="4" height="16" viewBox="0 0 4 16"><circle cx="2" cy="2.0" r="2" fill="#fff"/><circle cx="2" cy="7.5" r="2" fill="#fff"/><circle cx="2" cy="13.0" r="2" fill="#fff"/></svg>
<div class="a" style="left:708px;top:480px;width:109px;height:26px;background:#3b3e4a;border-radius:4px;"></div>
<div class="a" style="left:798px;top:480px;width:1px;height:26px;background:#2b2d38;"></div>
<div class="t" style="left:718px;top:488px;font-size:12px;color:#dcdcde;">淡入淡出</div>
<svg class="a" style="left:804px;top:487px" width="8" height="13" viewBox="0 0 8 13"><path d="M1 4.5L4 1.5L7 4.5M1 8.5L4 11.5L7 8.5" fill="none" stroke="#d8d8dc" stroke-width="1.1"/></svg>
<div class="t" style="left:706px;top:521px;font-size:12px;color:#e0e0e2;">时长</div>
<div class="a" style="left:734px;top:512px;width:83px;height:29px;background:#3b3e4a;border-radius:4px;"></div>
<div class="t" style="left:743px;top:521px;font-size:12px;color:#e0e0e2;letter-spacing:-0.2px">300 ms</div>
<svg class="a" style="left:801px;top:516px" width="10" height="21" viewBox="0 0 10 21"><path d="M1 6L5 2L9 6M1 15L5 19L9 15" fill="none" stroke="#e0e0e2" stroke-width="1.2"/></svg>
<div class="a" style="left:711px;top:546px;width:31px;height:25px;background:#3b3e4a;border-radius:4px;"></div>
<div class="a" style="left:749px;top:546px;width:31px;height:25px;background:#1b1c24;border-radius:4px;"></div>
<div class="a" style="left:787px;top:546px;width:31px;height:25px;background:#1b1c24;border-radius:4px;"></div>
<svg class="a" style="left:720px;top:551px" width="14" height="14" viewBox="0 0 14 14"><path d="M7.0 0V14M0 7.0H14" stroke="#fff" stroke-width="2"/></svg>
<svg class="a" style="left:758px;top:550.5px" width="13.8" height="15.64" viewBox="0 0 15 17"><rect x="5" y="0.6" width="5" height="2" rx="0.8" fill="#fff"/><rect x="0" y="2" width="15" height="2" rx="0.6" fill="#fff"/><path d="M1.85 4V14.3a2.2 2.2 0 0 0 2.2 2.2h6.9a2.2 2.2 0 0 0 2.2-2.2V4" fill="none" stroke="#fff" stroke-width="1.7"/><rect x="5" y="6" width="1" height="7" fill="#fff"/><rect x="7" y="6" width="1" height="7" fill="#fff"/><rect x="9" y="6" width="1" height="7" fill="#fff"/></svg>
<svg class="a" style="left:800px;top:550px" width="4" height="16" viewBox="0 0 4 16"><circle cx="2" cy="2.0" r="2" fill="#fff"/><circle cx="2" cy="7.5" r="2" fill="#fff"/><circle cx="2" cy="13.0" r="2" fill="#fff"/></svg>
<div class="a" style="left:833px;top:478px;width:185px;height:36px;background:#3b3e4a;border-radius:4px;"></div>
<div class="t" style="left:901px;top:491px;font-size:12px;color:#e8e8ea;">开始直播</div>
<div class="a" style="left:833px;top:518px;width:185px;height:36px;background:#3b3e4a;border-radius:4px;"></div>
<div class="t" style="left:901px;top:531px;font-size:12px;color:#e8e8ea;">开始录制</div>
<div class="a" style="left:833px;top:590px;width:185px;height:29px;background:#3b3e4a;border-radius:4px;"></div>
<div class="t" style="left:895px;top:599px;font-size:12px;color:#e8e8ea;">工作室模式</div>
<div class="a" style="left:833px;top:622px;width:185px;height:29px;background:#4d505c;border-radius:4px;"></div>
<div class="t" style="left:913px;top:631px;font-size:12px;color:#e8e8ea;">设置</div>
<div class="a" style="left:833px;top:655px;width:185px;height:28px;background:#3b3e4a;border-radius:4px;"></div>
<div class="t" style="left:913px;top:664px;font-size:12px;color:#e8e8ea;">退出</div>
<div class="a" style="left:833px;top:558px;width:153px;height:29px;background:#3b3e4a;border-radius:4px;"></div>
<div class="t" style="left:867px;top:567px;font-size:12px;color:#e8e8ea;">启动虚拟摄像机</div>
<div class="a" style="left:990px;top:558px;width:28px;height:29px;background:#3b3e4a;border-radius:4px;"></div>
<svg class="a" style="left:997px;top:565px" width="14" height="14" viewBox="0 0 14 14"><path fill="#fff" fill-rule="evenodd" d="M5.44 1.62 L5.62 0.34 L8.38 0.34 L8.56 1.62 L9.70 2.09 L10.73 1.32 L12.68 3.27 L11.91 4.30 L12.38 5.44 L13.66 5.62 L13.66 8.38 L12.38 8.56 L11.91 9.70 L12.68 10.73 L10.73 12.68 L9.70 11.91 L8.56 12.38 L8.38 13.66 L5.62 13.66 L5.44 12.38 L4.30 11.91 L3.27 12.68 L1.32 10.73 L2.09 9.70 L1.62 8.56 L0.34 8.38 L0.34 5.62 L1.62 5.44 L2.09 4.30 L1.32 3.27 L3.27 1.32 L4.30 2.09Z M9.50 7.00 A2.5 2.5 0 1 0 4.50 7.00 A2.5 2.5 0 1 0 9.50 7.00Z"/></svg>
<div class="a" style="left:1px;top:692px;width:1022px;height:1px;background:#393b47;"></div>
<div class="a" style="left:1px;top:693px;width:1022px;height:27px;background:#2b2d38;"></div>
<div class="a" style="left:578px;top:693px;width:1px;height:27px;background:#393b47;"></div>
<div class="a" style="left:616px;top:693px;width:1px;height:27px;background:#393b47;"></div>
<div class="a" style="left:706px;top:693px;width:1px;height:27px;background:#393b47;"></div>
<div class="a" style="left:796px;top:693px;width:1px;height:27px;background:#393b47;"></div>
<div class="a" style="left:882px;top:693px;width:1px;height:27px;background:#393b47;"></div>
<svg class="a" style="left:589px;top:699px" width="15" height="14" viewBox="0 0 15 14"><rect x="0" y="9" width="3" height="4" rx="0.5" fill="#5a5d68"/><rect x="4" y="6" width="3" height="7" rx="0.5" fill="#5a5d68"/><rect x="8" y="3" width="3" height="10" rx="0.5" fill="#5a5d68"/><rect x="12" y="0" width="3" height="13" rx="0.5" fill="#5a5d68"/></svg>
<svg class="a" style="left:628px;top:700px" width="15" height="11" viewBox="0 0 15 11"><circle cx="7.5" cy="5.5" r="2.2" fill="#6a6d78"/><path d="M4.5 2.2a4.5 4.5 0 0 0 0 6.6M10.5 2.2a4.5 4.5 0 0 1 0 6.6M2.3 0.6a7 7 0 0 0 0 9.8M12.7 0.6a7 7 0 0 1 0 9.8" fill="none" stroke="#555863" stroke-width="1.1"/></svg>
<div class="t" style="left:650px;top:701px;font-size:12px;color:#8d8f98;letter-spacing:-0.3px">00:00:00</div>
<div class="a" style="left:719px;top:699px;width:14px;height:14px;background:#5a5d68;border-radius:7px;"></div>
<div class="t" style="left:739px;top:701px;font-size:12px;color:#8d8f98;letter-spacing:-0.3px">00:00:00</div>
<div class="t" style="left:808px;top:701px;font-size:12px;color:#dcdcde;letter-spacing:-0.3px">CPU: 11.1%</div>
<div class="t" style="left:894px;top:701px;font-size:12px;color:#dcdcde;letter-spacing:-0.3px">30.00 / 30.00 FPS</div>
<svg class="a" style="left:1011px;top:711px" width="10" height="9" viewBox="0 0 10 9"><rect x="7" y="0" width="2" height="2" fill="#8a8c94"/><rect x="4" y="3" width="2" height="2" fill="#8a8c94"/><rect x="7" y="3" width="2" height="2" fill="#8a8c94"/><rect x="1" y="6" width="2" height="2" fill="#8a8c94"/><rect x="4" y="6" width="2" height="2" fill="#8a8c94"/><rect x="7" y="6" width="2" height="2" fill="#8a8c94"/></svg>
</body>
</html>
